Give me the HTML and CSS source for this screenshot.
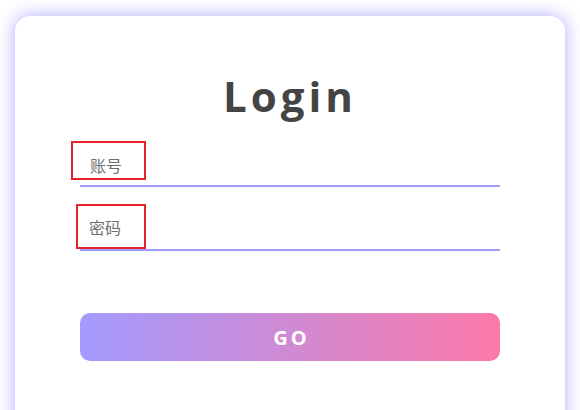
FILE: index.html
```html
<!DOCTYPE html>
<html lang="zh">
<head>
<meta charset="utf-8">
<title>Login</title>
<link rel="stylesheet" href="styles.css">
</head>
<body>
<div class="page">
  <div class="card">
    <h1 class="title">Login</h1>
    <form class="form">
      <div class="field field-user">
        <label class="label label-user">账号</label>
      </div>
      <div class="field field-pass">
        <label class="label label-pass">密码</label>
      </div>
      <button type="button" class="go">GO</button>
    </form>
  </div>
</div>
</body>
</html>
```

FILE: styles.css
```css
html, body {
  margin: 0;
  padding: 0;
  background: #fff;
}
.page {
  width: 580px;
  height: 410px;
  box-sizing: border-box;
  padding: 16px 15px 0;
  overflow: hidden;
}
.card {
  background: #fff;
  border-radius: 15px;
  box-shadow: 0 0 18px rgba(162, 155, 254, 0.85);
  padding: 51px 65px 60px;
  height: 460px;
  box-sizing: border-box;
}
.title {
  margin: 0;
  text-align: center;
  font-family: "Open Sans", "Noto Sans", sans-serif;
  font-weight: 700;
  font-size: 42px;
  line-height: 57px;
  letter-spacing: 4px;
  color: #444;
}
.form {
  margin-top: 17px;
  display: flex;
  flex-direction: column;
}
.field {
  display: flex;
  border-bottom: 2px solid #a29bfe;
}
.label {
  box-sizing: border-box;
  border: 2px solid #e3242b;
  font-family: "Noto Sans CJK SC", "Noto Sans", sans-serif;
  font-size: 16px;
  line-height: 16px;
  color: #6e6e6e;
}
.label-user {
  width: 75px;
  height: 39px;
  margin-left: -9px;
  margin-bottom: 5px;
  padding: 14px 0 0 17px;
}
.field-pass {
  margin-top: 17px;
}
.label-pass {
  width: 70px;
  height: 45px;
  margin-left: -4px;
  padding: 13px 0 0 11px;
}
.go {
  margin-top: 62px;
  height: 48px;
  border: 0;
  border-radius: 10px;
  background: linear-gradient(to right, #a29bfe, #fd79a8);
  color: #fff;
  font-family: "Open Sans", "Noto Sans", sans-serif;
  font-weight: 700;
  font-size: 20px;
  letter-spacing: 3px;
  padding: 0 0 0 3px;
}
```
